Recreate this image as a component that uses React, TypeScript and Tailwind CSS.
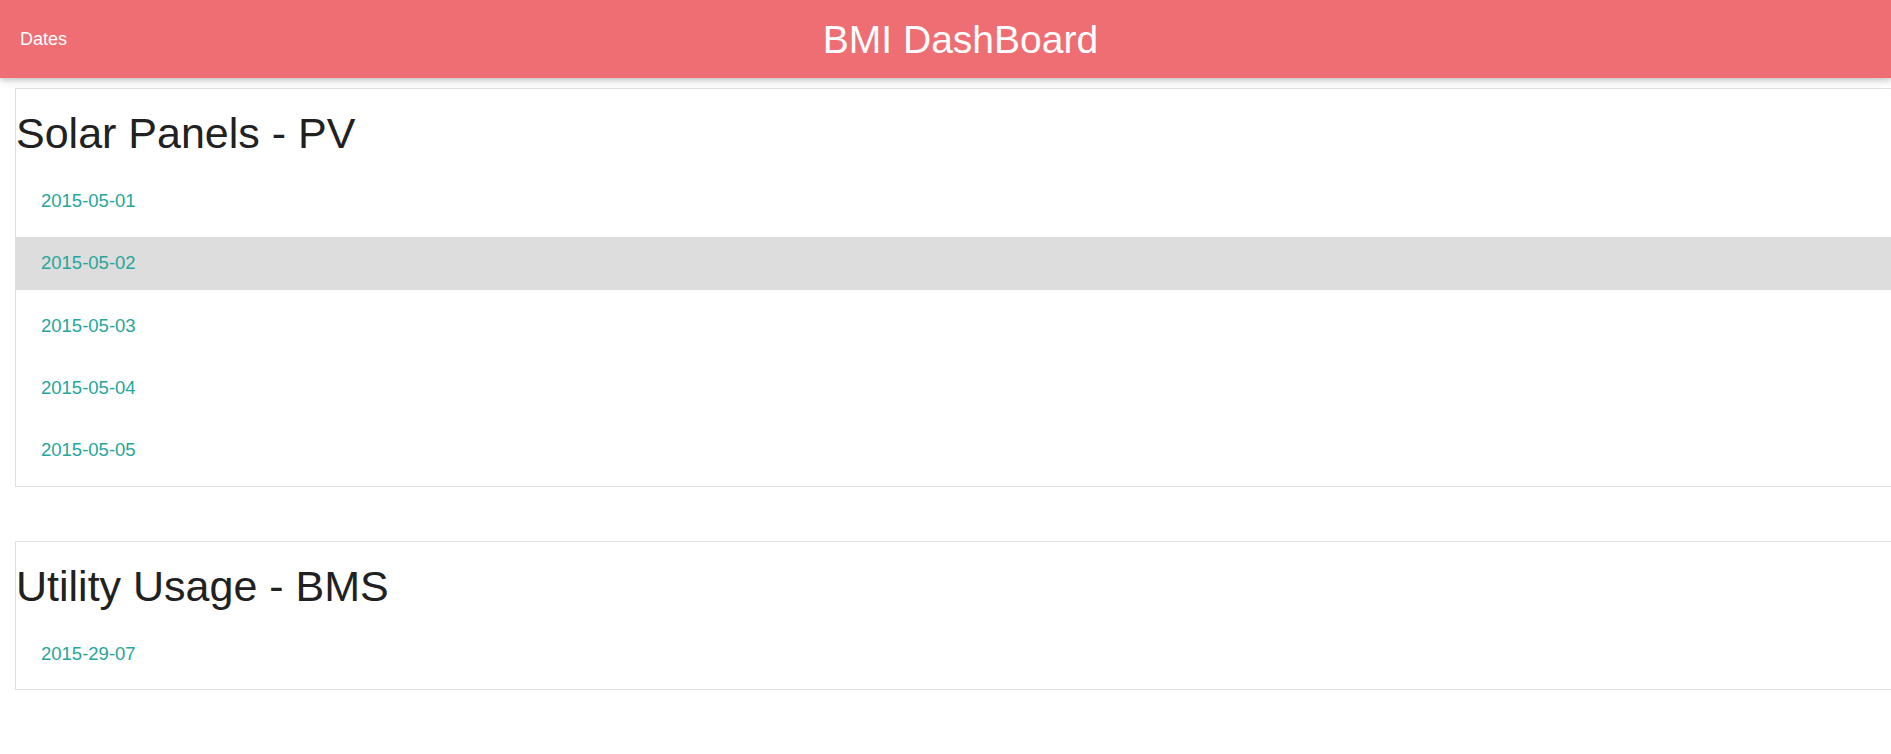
const sections = [
  {
    title: "Solar Panels - PV",
    dates: ["2015-05-01", "2015-05-02", "2015-05-03", "2015-05-04", "2015-05-05"],
    active: "2015-05-02",
  },
  {
    title: "Utility Usage - BMS",
    dates: ["2015-29-07"],
    active: "",
  },
];

function DateCard({ title, dates, active }: { title: string; dates: string[]; active: string }) {
  return (
    <div className="w-[calc(100%+20px)] border border-[#e0e0e0] bg-white pb-[9px]">
      <h3 className="mt-[21px] text-[43px] leading-[47px] font-normal text-[#212121]">{title}</h3>
      <ul className="mt-[17.5px] flex flex-col gap-[9.3px]">
        {dates.map((d) => (
          <li
            key={d}
            className={
              d === active
                ? "flex h-[53px] items-center bg-[#dddddd] pl-[25px]"
                : "flex h-[53px] items-center pl-[25px]"
            }>
            <a href="#" className="text-[18.5px] text-[#26a69a]">
              {d}
            </a>
          </li>
        ))}
      </ul>
    </div>
  );
}

export default function App() {
  return (
    <div className="min-h-[754px] overflow-hidden bg-white font-['Liberation_Sans',Arial,sans-serif]">
      <nav className="relative flex h-[78px] items-center justify-center bg-[#ee6e73] pl-[30px] text-white shadow-[0_2px_5px_0_rgba(0,0,0,0.16),0_2px_10px_0_rgba(0,0,0,0.12)]">
        <a href="#" className="absolute left-[20px] top-1/2 -translate-y-1/2 text-[18px]">
          Dates
        </a>
        <span className="text-[39px] leading-none">BMI DashBoard</span>
      </nav>

      <div className="flex flex-col gap-[54px] pt-[10px] pl-[15px]">
        {sections.map((s) => (
          <DateCard key={s.title} title={s.title} dates={s.dates} active={s.active} />
        ))}
      </div>
    </div>
  );
}
